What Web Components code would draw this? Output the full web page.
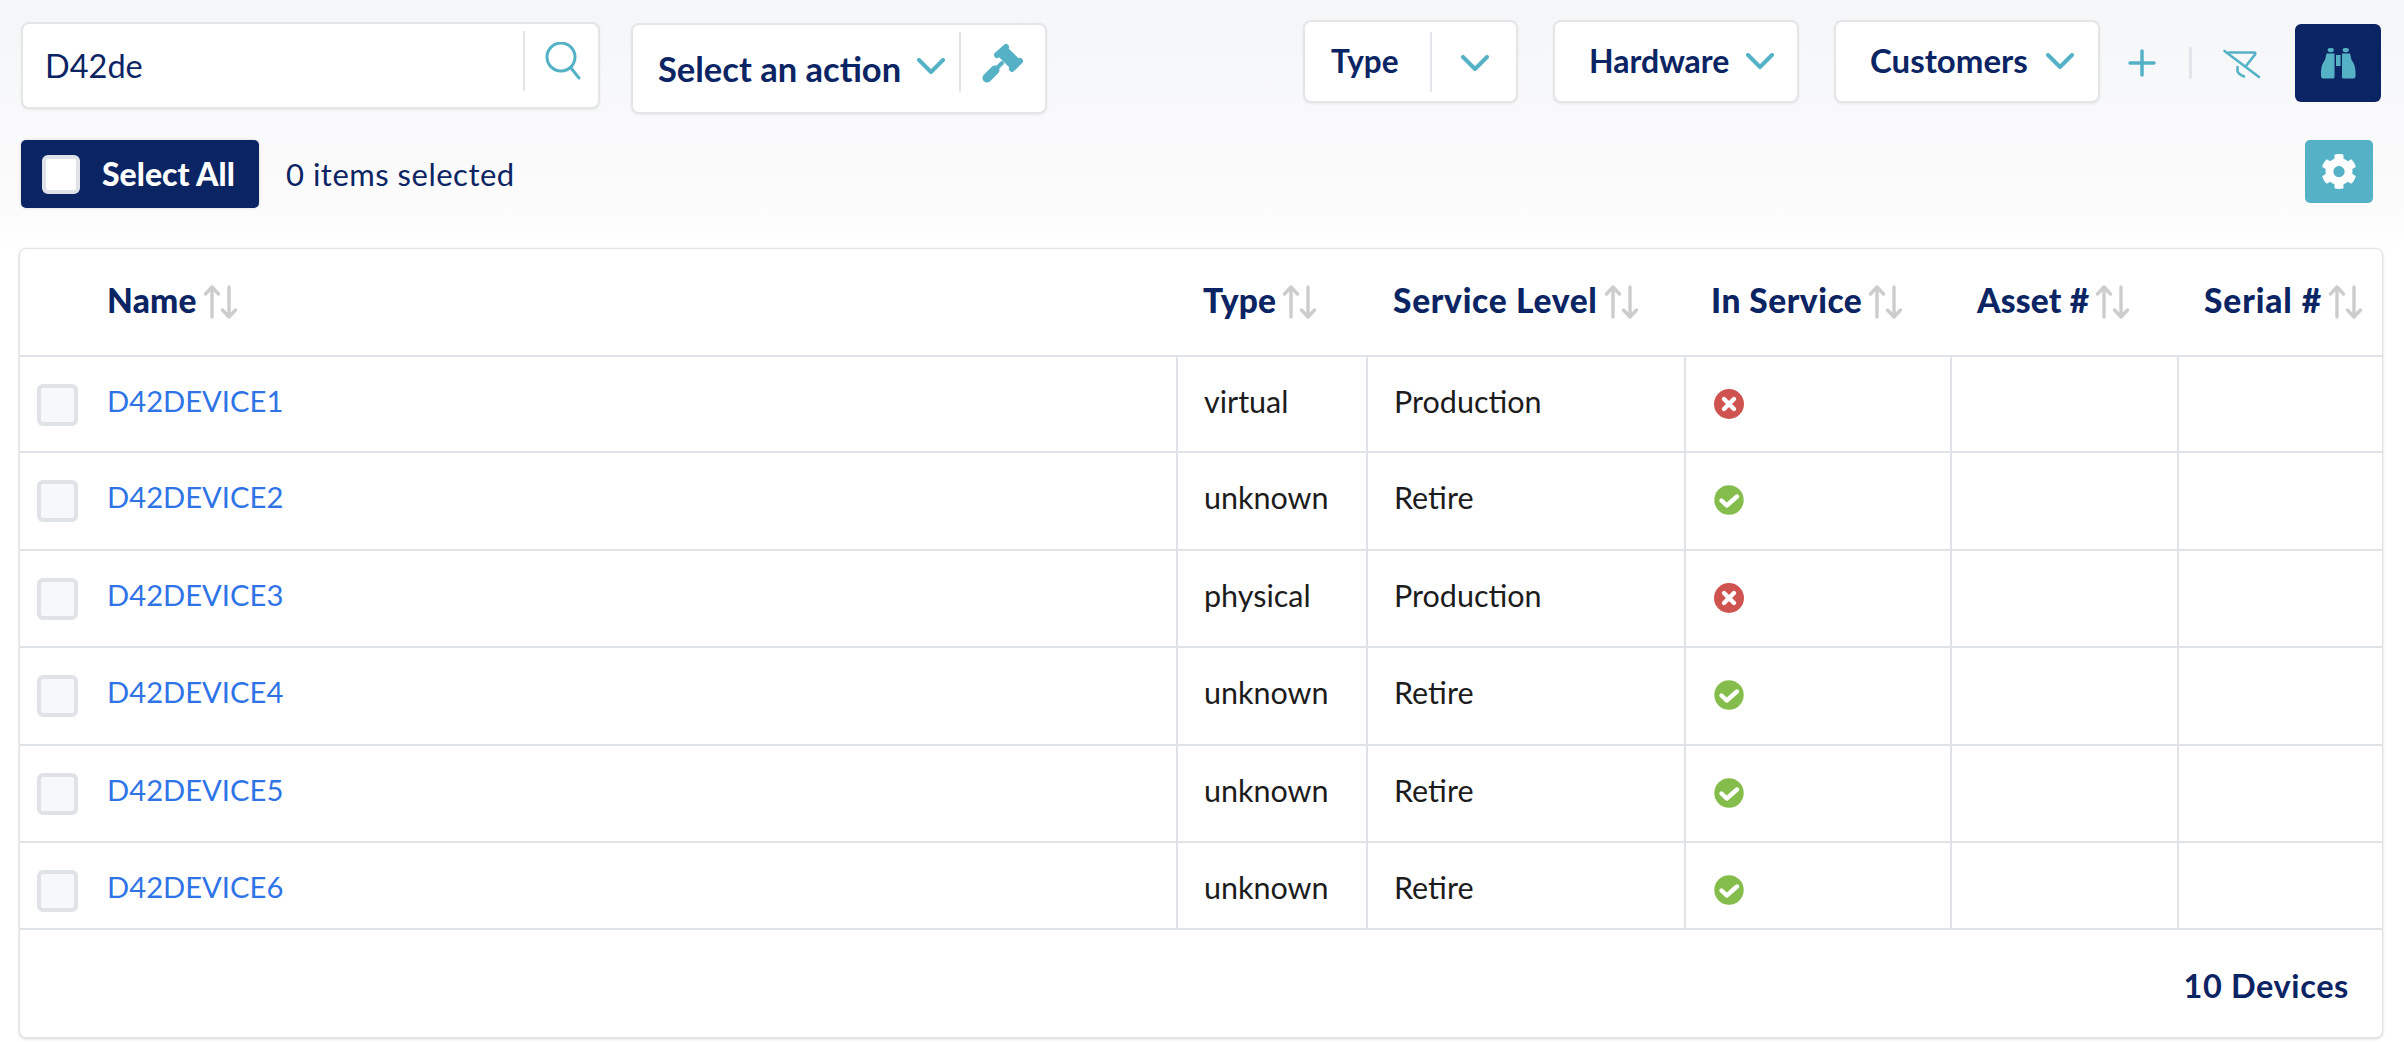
<!DOCTYPE html>
<html>
<head>
<meta charset="utf-8">
<title>Devices</title>
<style>
html, body { margin: 0; padding: 0; }
body {
    height: 1042px;
    overflow: hidden;
    background: linear-gradient(#f5f6f8 0, #fbfbfc 200px, #fff 250px);
    font-family: "Lato", "Liberation Sans", sans-serif;
    color: #0b2463;
}
</style>
</head>
<body>
<device-page>
    <page-toolbar>
        <tool-panel slot="left" style="width:575px;height:83px;margin-top:2px">
            <span style="width:478px;padding-left:22px;font-size:32.5px">D42de</span>
            <panel-divider style="margin-top:-9px"></panel-divider>
            <d42-icon name="search" style="margin-left:20px;margin-top:-10px"></d42-icon>
        </tool-panel>
        <tool-panel slot="left" style="width:412px;height:87px;margin-top:3px">
            <span style="padding-left:25px;width:245px;font-size:34.5px;font-weight:700;white-space:nowrap">Select an action</span>
            <d42-icon name="chevron" style="margin-left:14px;margin-top:-6px"></d42-icon>
            <panel-divider style="margin-left:14px;margin-top:-14px"></panel-divider>
            <d42-icon name="gavel" style="margin-left:21px;margin-top:-10px"></d42-icon>
        </tool-panel>
        <tool-panel slot="right" style="width:211px;height:79px">
            <span style="padding-left:26px;width:99px;font-size:31.5px;font-weight:700;margin-top:-2px">Type</span>
            <panel-divider></panel-divider>
            <d42-icon name="chevron" style="margin-left:29px;margin-top:2px"></d42-icon>
        </tool-panel>
        <tool-panel slot="right" style="width:242px;height:79px">
            <span style="padding-left:34px;width:138px;font-size:32px;font-weight:700;margin-top:-3px">Hardware</span>
            <d42-icon name="chevron" style="margin-left:19px;margin-top:-2px"></d42-icon>
        </tool-panel>
        <tool-panel slot="right" style="width:262px;height:79px">
            <span style="padding-left:34px;width:156px;font-size:33px;font-weight:700;margin-top:-3px">Customers</span>
            <d42-icon name="chevron" style="margin-left:20px;margin-top:-2px"></d42-icon>
        </tool-panel>
        <filter-tools slot="right"></filter-tools>
    </page-toolbar>
    <select-bar></select-bar>
    <device-table>
        <device-row name="D42DEVICE1" type="virtual" level="Production"></device-row>
        <device-row name="D42DEVICE2" type="unknown" level="Retire" ok style="--row-h:98px"></device-row>
        <device-row name="D42DEVICE3" type="physical" level="Production" style="--row-h:97px"></device-row>
        <device-row name="D42DEVICE4" type="unknown" level="Retire" ok style="--row-h:98px"></device-row>
        <device-row name="D42DEVICE5" type="unknown" level="Retire" ok style="--row-h:97px"></device-row>
        <device-row name="D42DEVICE6" type="unknown" level="Retire" ok style="--row-h:87px"></device-row>
    </device-table>
</device-page>

<script>
const TEAL = "#55b2c6";
const ICONS = {
    search: `<svg width="36" height="38" viewBox="0 0 36 38" fill="none" stroke="${TEAL}" stroke-width="3" stroke-linecap="round"><circle cx="16" cy="15" r="14"/><path d="M26 26 L34 36"/></svg>`,
    chevron: `<svg width="28" height="16" viewBox="0 0 28 16" fill="none" stroke="${TEAL}" stroke-width="4" stroke-linecap="round" stroke-linejoin="round"><path d="M2 2 L14 14 L26 2"/></svg>`,
    gavel: `<svg width="41" height="39" viewBox="0 0 41 39" fill="none" stroke="${TEAL}" stroke-linecap="round"><path d="M24 3 L15 11" stroke-width="6"/><path d="M38 17 L30 25" stroke-width="6"/><path d="M20 7 L33 20" stroke-width="13" stroke-linecap="butt"/><path d="M5 34 L13 26" stroke-width="9"/><path d="M13 26 L20 19" stroke-width="4"/></svg>`,
    plus: `<svg width="28" height="28" viewBox="0 0 28 28" fill="none" stroke="${TEAL}" stroke-width="3.5" stroke-linecap="round"><path d="M14 2 V26 M2 14 H26"/></svg>`,
    filterOff: `<svg width="37" height="30" viewBox="0 0 37 30" fill="none" stroke="${TEAL}" stroke-width="2.6" stroke-linecap="round" stroke-linejoin="round"><path d="M1.5 2 L36 28"/><path d="M6 3.5 H31 Q33 3.5 32 5.5 L23 17"/><path d="M14.5 18 V22 Q15 25 21 27.5"/></svg>`,
    binoculars: `<svg width="36" height="32" viewBox="0 0 36 32" fill="${TEAL}"><path d="M6.5 6.5 H14.5 V30 Q14.5 31.5 13 31.5 H3 Q1 31.5 1 29 V24 Q1.5 17 5 13 Z"/><rect x="7.5" y="1" width="6.5" height="4.2" rx="2.5"/><path d="M30 6.5 H22 V30 Q22 31.5 23.5 31.5 H33.5 Q35.5 31.5 35.5 29 V24 Q35 17 31.5 13 Z"/><rect x="22.5" y="1" width="6.5" height="4.2" rx="2.5"/><rect x="16" y="8" width="4.6" height="11"/></svg>`,
    cog: `<svg width="36" height="37" viewBox="0 0 512 512" fill="#fff"><path fill-rule="evenodd" d="M487.4 315.7l-42.6-24.6c4.3-23.2 4.3-47 0-70.2l42.6-24.6c4.9-2.8 7.1-8.6 5.5-14-11.1-35.6-30-67.8-54.7-94.6-3.8-4.1-10-5.1-14.8-2.3L380.8 110c-17.9-15.4-38.5-27.3-60.8-35.1V25.8c0-5.6-3.9-10.5-9.4-11.7-36.7-8.2-74.3-7.8-109.2 0-5.5 1.2-9.4 6.1-9.4 11.7V75c-22.2 7.9-42.8 19.8-60.8 35.1L88.7 85.5c-4.9-2.8-11-1.9-14.8 2.3-24.7 26.7-43.6 58.9-54.7 94.6-1.7 5.4.6 11.2 5.5 14L67.3 221c-4.3 23.2-4.3 47 0 70.2l-42.6 24.6c-4.9 2.8-7.1 8.6-5.5 14 11.1 35.6 30 67.8 54.7 94.6 3.8 4.1 10 5.1 14.8 2.3l42.6-24.6c17.9 15.4 38.5 27.3 60.8 35.1v49.2c0 5.6 3.9 10.5 9.4 11.7 36.7 8.2 74.3 7.8 109.2 0 5.5-1.2 9.4-6.1 9.4-11.7v-49.2c22.2-7.9 42.8-19.8 60.8-35.1l42.6 24.6c4.9 2.8 11 1.9 14.8-2.3 24.7-26.7 43.6-58.9 54.7-94.6 1.5-5.5-.7-11.3-5.6-14.1zM256 336c-44.1 0-80-35.9-80-80s35.9-80 80-80 80 35.9 80 80-35.9 80-80 80z"/></svg>`,
    sort: `<svg width="38" height="34" viewBox="0 0 38 34" fill="none" stroke="#cdcdcd" stroke-width="3.4" stroke-linecap="round" stroke-linejoin="round"><path d="M9 32 V2 M2.5 9 L9 2 L15.5 9"/><path d="M26 2 V32 M19.5 25 L26 32 L32.5 25"/></svg>`,
    bad: `<svg width="30" height="30" viewBox="0 0 30 30"><circle cx="15" cy="15" r="15" fill="#cf5450"/><path d="M10 10 L20 20 M20 10 L10 20" stroke="#fff" stroke-width="4.4" stroke-linecap="round"/></svg>`,
    good: `<svg width="30" height="30" viewBox="0 0 30 30"><circle cx="15" cy="15" r="14.7" fill="#84bd4b"/><path d="M7.5 15.5 L12.7 20.5 L23 11.5" fill="none" stroke="#fff" stroke-width="4.4" stroke-linecap="round" stroke-linejoin="round"/></svg>`
};

class D42Icon extends HTMLElement{
    constructor(){
        super();
        this.attachShadow({mode:"open"});
    }
    connectedCallback(){
        this.shadowRoot.innerHTML = `<style>:host{display:inline-flex;flex:none;line-height:0}</style>` + ICONS[this.getAttribute("name")];
    }
}
customElements.define("d42-icon", D42Icon);

const ToolPanelTemplate = document.createElement("template");
ToolPanelTemplate.innerHTML = `
<style>
:host{
    display:flex;
    align-items:center;
    box-sizing:border-box;
    flex:none;
    background:#fff;
    border-radius:6px;
    box-shadow:0 0 0 2px #e4e5e7, 0 1px 3px 1px #d8d9dc;
    font-family:"Lato","Liberation Sans",sans-serif;
    color:#0b2463;
}
</style>
<slot></slot>`;
class ToolPanel extends HTMLElement{
    constructor(){
        super();
        this.attachShadow({mode:"open"}).appendChild(ToolPanelTemplate.content.cloneNode(true));
    }
}
customElements.define("tool-panel", ToolPanel);

class PanelDivider extends HTMLElement{
    constructor(){
        super();
        this.attachShadow({mode:"open"}).innerHTML = `<style>:host{display:block;flex:none;width:2px;height:60px;background:#e2e5e9}</style>`;
    }
}
customElements.define("panel-divider", PanelDivider);

class DevicePage extends HTMLElement{
    constructor(){
        super();
        this.attachShadow({mode:"open"}).innerHTML = `<style>:host{display:flex;flex-direction:column;padding-top:22px}</style><slot></slot>`;
    }
}
customElements.define("device-page", DevicePage);

class PageToolbar extends HTMLElement{
    constructor(){
        super();
        this.attachShadow({mode:"open"}).innerHTML = `
<style>
:host{display:flex;justify-content:space-between;align-items:flex-start;padding:0 23px;height:90px}
.left{display:flex;gap:35px;align-items:flex-start}
.right{display:flex;gap:39px;align-items:flex-start}
</style>
<div class="left"><slot name="left"></slot></div>
<div class="right"><slot name="right"></slot></div>`;
    }
}
customElements.define("page-toolbar", PageToolbar);

class FilterTools extends HTMLElement{
    constructor(){
        super();
        this.attachShadow({mode:"open"}).innerHTML = `
<style>
:host{display:flex;align-items:center;margin-left:-9px;height:79px;margin-top:1px}
.sep{width:3px;height:32px;background:#e2e5e9;border-radius:2px;margin:0 31px 0 33px}
.find{display:flex;align-items:center;justify-content:center;width:86px;height:78px;background:#0b2463;border-radius:6px;margin-left:35px}
</style>
<d42-icon name="plus"></d42-icon>
<div class="sep"></div>
<d42-icon name="filterOff" style="margin-top:2px"></d42-icon>
<div class="find"><d42-icon name="binoculars"></d42-icon></div>`;
    }
}
customElements.define("filter-tools", FilterTools);

class SelectBar extends HTMLElement{
    constructor(){
        super();
        this.attachShadow({mode:"open"}).innerHTML = `
<style>
:host{display:flex;align-items:center;padding:0 31px 0 21px;height:68px;margin-top:28px;font-family:"Lato","Liberation Sans",sans-serif}
.all{display:flex;align-items:center;box-sizing:border-box;width:238px;height:68px;background:#0b2463;border-radius:5px;box-shadow:0 0 3px #d4d5d8;padding-left:21px;color:#fff;font-size:32px;font-weight:900}
.all span:last-child{margin-top:-2px}
.box{box-sizing:border-box;width:38px;height:39px;background:#fff;border:4px solid #dfe3e8;border-radius:6px;margin-right:22px}
.count{margin-left:27px;font-size:31px;color:#0b2463;letter-spacing:.5px}
.gear{display:flex;align-items:center;justify-content:center;margin-left:auto;width:68px;height:63px;background:#55b2c6;border-radius:5px;margin-top:-5px}
</style>
<div class="all"><span class="box"></span><span>Select All</span></div>
<span class="count">0 items selected</span>
<div class="gear"><d42-icon name="cog"></d42-icon></div>`;
    }
}
customElements.define("select-bar", SelectBar);

const COLUMNS = "1156px 190px 318px 266px 227px 1fr";

class SortHead extends HTMLElement{
    constructor(){
        super();
        this.attachShadow({mode:"open"}).innerHTML = `
<style>
:host{display:flex;align-items:center;gap:6px;font-size:33.5px;font-weight:900;letter-spacing:.2px;color:#0b2463;white-space:nowrap;margin-top:-4px}
d42-icon{margin-top:3px}
</style>
<slot></slot><d42-icon name="sort"></d42-icon>`;
    }
}
customElements.define("sort-head", SortHead);

class DeviceTable extends HTMLElement{
    constructor(){
        super();
        this.attachShadow({mode:"open"}).innerHTML = `
<style>
:host{
    display:block;
    box-sizing:border-box;
    width:2362px;
    margin:41px 0 0 20px;
    background:#fff;
    border-radius:6px;
    box-shadow:0 0 0 1px #e2e3e6, 0 1px 3px 1px #d4d5d8;
    font-family:"Lato","Liberation Sans",sans-serif;
}
.head{display:grid;grid-template-columns:${COLUMNS};height:108px;border-bottom:2px solid #dfe3e8;box-sizing:border-box;align-items:center}
.head sort-head:first-child{padding-left:87px}
.head sort-head:not(:first-child){padding-left:27px}
.foot{display:flex;justify-content:flex-end;align-items:center;height:107px;padding:3px 33px 0 0;box-sizing:border-box;font-size:32.5px;font-weight:700;color:#0b2463;letter-spacing:.6px}
</style>
<div class="head">
    <sort-head>Name</sort-head>
    <sort-head>Type</sort-head>
    <sort-head style="letter-spacing:.7px">Service Level</sort-head>
    <sort-head style="letter-spacing:.5px">In Service</sort-head>
    <sort-head>Asset #</sort-head>
    <sort-head style="letter-spacing:.9px">Serial #</sort-head>
</div>
<slot></slot>
<div class="foot">10 Devices</div>`;
    }
}
customElements.define("device-table", DeviceTable);

class DeviceRow extends HTMLElement{
    constructor(){
        super();
        this.attachShadow({mode:"open"});
    }
    connectedCallback(){
        const ok = this.hasAttribute("ok");
        this.shadowRoot.innerHTML = `
<style>
:host{
    display:grid;
    grid-template-columns:${COLUMNS};
    box-sizing:border-box;
    height:var(--row-h, 96px);
    border-bottom:2px solid #dfe3e8;
    font-size:30.5px;
    line-height:36px;
    color:#1c1c1c;
}
.cell{display:flex;align-items:flex-start;box-sizing:border-box;padding:26px 0 0 26px;white-space:nowrap}
.cell + .cell{border-left:2px solid #dfe3e8;padding-left:26px}
.cell.name{padding-left:17px}
.box{box-sizing:border-box;width:41px;height:42px;background:#f7f8fa;border:4px solid #dfe3e8;border-radius:6px;margin:1px 29px 0 0}
a{color:#2f74e6;text-decoration:none;font-size:29.2px}
d42-icon{margin:6px 0 0 2px}
</style>
<div class="cell name"><span class="box"></span><a>${this.getAttribute("name")}</a></div>
<div class="cell">${this.getAttribute("type")}</div>
<div class="cell">${this.getAttribute("level")}</div>
<div class="cell"><d42-icon name="${ok ? "good" : "bad"}"></d42-icon></div>
<div class="cell"></div>
<div class="cell"></div>`;
    }
}
customElements.define("device-row", DeviceRow);
</script>
</body>
</html>
